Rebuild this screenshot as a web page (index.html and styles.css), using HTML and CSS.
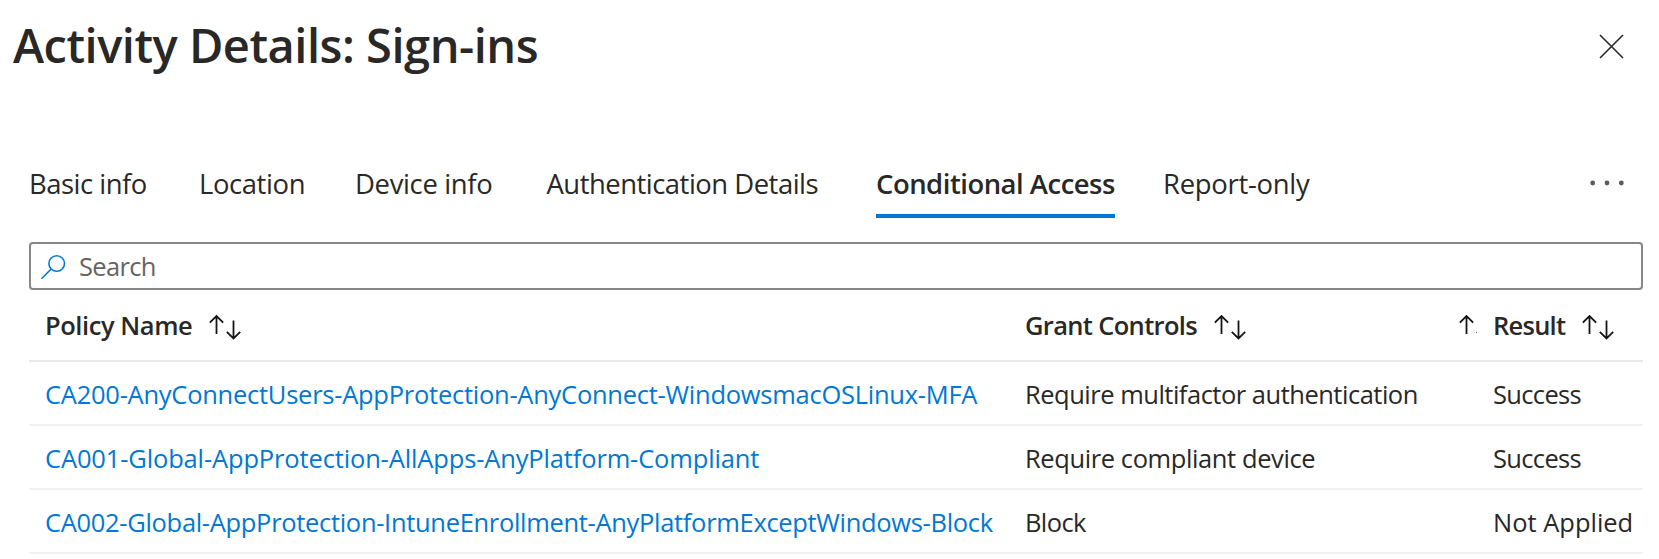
FILE: index.html
```html
<!DOCTYPE html>
<html lang="en">
<head>
<meta charset="utf-8">
<title>Activity Details: Sign-ins</title>
<link rel="stylesheet" href="styles.css">
</head>
<body>
<svg class="defs" aria-hidden="true">
  <symbol id="sort" viewBox="0 0 34 26">
    <path d="M8.5 20V2M1.8 8.7L8.5 2l6.7 6.7M25.5 6.5v18M18.8 17.8l6.7 6.7 6.7-6.7"/>
  </symbol>
</svg>
<main class="panel">
  <header class="panel-head">
    <h1 class="title">Activity Details: Sign-ins</h1>
    <button class="close" aria-label="Close">
      <svg class="close-icon" viewBox="0 0 25 25"><path d="M1 1l23 23M24 1L1 24"/></svg>
    </button>
  </header>

  <nav class="tabs">
    <a class="tab tab-basic">Basic info</a>
    <a class="tab tab-location">Location</a>
    <a class="tab tab-device">Device info</a>
    <a class="tab tab-auth">Authentication Details</a>
    <a class="tab tab-active">Conditional Access</a>
    <a class="tab tab-report">Report-only</a>
    <button class="more" aria-label="More">
      <svg class="more-icon" viewBox="0 0 34 6"><circle cx="2.7" cy="3" r="2.4"/><circle cx="17" cy="3" r="2.4"/><circle cx="31.3" cy="3" r="2.4"/></svg>
    </button>
  </nav>

  <div class="search">
    <svg class="search-icon" viewBox="0 0 26 26"><circle cx="16.7" cy="9.5" r="7.8"/><path d="M11.2 15L1.5 24.7"/></svg>
    <span class="search-text">Search</span>
  </div>

  <section class="table">
    <div class="row row-head">
      <div class="cell"><span class="label-policy">Policy Name</span><svg class="sort"><use href="#sort"/></svg></div>
      <div class="cell"><span class="label-grant">Grant Controls</span><svg class="sort"><use href="#sort"/></svg></div>
      <div class="cell cell-narrow"><svg class="sort"><use href="#sort"/></svg></div>
      <div class="cell"><span class="label-result">Result</span><svg class="sort"><use href="#sort"/></svg></div>
    </div>
    <div class="row">
      <div class="cell"><a class="link link-mfa">CA200-AnyConnectUsers-AppProtection-AnyConnect-WindowsmacOSLinux-MFA</a></div>
      <div class="cell grant-mfa">Require multifactor authentication</div>
      <div class="cell cell-narrow"></div>
      <div class="cell success">Success</div>
    </div>
    <div class="row">
      <div class="cell"><a class="link link-compliant">CA001-Global-AppProtection-AllApps-AnyPlatform-Compliant</a></div>
      <div class="cell grant-device">Require compliant device</div>
      <div class="cell cell-narrow"></div>
      <div class="cell success">Success</div>
    </div>
    <div class="row">
      <div class="cell"><a class="link link-block">CA002-Global-AppProtection-IntuneEnrollment-AnyPlatformExceptWindows-Block</a></div>
      <div class="cell grant-block">Block</div>
      <div class="cell cell-narrow"></div>
      <div class="cell">Not Applied</div>
    </div>
  </section>
</main>
</body>
</html>
```
FILE: styles.css
```css
* { box-sizing: border-box; }

body {
  margin: 0;
  background: #fff;
  color: #292827;
  font-family: "Open Sans", "Noto Sans", sans-serif;
  font-size: 25.48px;
  overflow: hidden;
}

.defs { display: none; }
.panel { width: 1659px; height: 559px; }
button { border: 0; padding: 0; background: none; }

.panel-head {
  display: flex;
  justify-content: space-between;
  height: 163px;
  padding: 13px 35.5px 0 13px;
}
.title {
  margin: 0;
  font-size: 47px;
  font-weight: 600;
  line-height: 64px;
  letter-spacing: -0.484px;
}
.close { width: 25px; height: 25px; margin-top: 20.5px; }
.close-icon { display: block; width: 25px; height: 25px; fill: none; stroke: #292827; stroke-width: 1.6; }

.tabs {
  display: grid;
  grid-template-columns: 170px 156px 191.5px 329.5px 287px 1fr 34px;
  height: 79px;
  padding: 0 35px 0 29px;
  font-size: 27.44px;
  line-height: 42px;
  white-space: nowrap;
}
.tab { height: 55px; justify-self: start; }
.tab-basic { letter-spacing: -0.5px; }
.tab-location { letter-spacing: -0.4px; }
.tab-device { letter-spacing: -0.34px; }
.tab-auth { letter-spacing: -0.499px; }
.tab-active { width: 239px; font-weight: 600; letter-spacing: -0.484px; border-bottom: 4px solid #0078d4; }
.tab-report { letter-spacing: -0.271px; }
.more { height: 40px; }
.more-icon { display: block; width: 34px; height: 6px; fill: #5c5b5a; }

.search {
  display: flex;
  align-items: center;
  height: 48px;
  margin: 0 16px 0 29px;
  padding-left: 9px;
  border: 2px solid #868686;
  border-radius: 4px;
}
.search-icon { width: 26px; height: 26px; margin-top: 1px; fill: none; stroke: #0078d4; stroke-width: 1.6; }
.search-text { margin: -1px 0 0 13px; color: #666463; letter-spacing: -0.65px; }

.table { margin: 0 16px 0 29px; }
.row {
  display: grid;
  grid-template-columns: 980px 433px 35px 166px;
  height: 64px;
  padding-top: 2px;
  border-bottom: 2px solid #f1f1f1;
  white-space: nowrap;
}
.row-head {
  height: 72px;
  padding-top: 0;
  border-bottom-color: #e9e9e9;
  font-weight: 600;
}
.cell { display: flex; align-items: center; padding-left: 16px; min-width: 0; }
.cell-narrow { overflow: hidden; }
.sort { flex: none; width: 34px; height: 26px; margin: 3px 0 0 15.5px; fill: none; stroke: #161616; stroke-width: 1.8; }
.cell-narrow .sort { margin-left: 0; }

.label-policy { letter-spacing: -0.432px; }
.label-grant { letter-spacing: -0.65px; }
.label-result { letter-spacing: -0.724px; }
.link { color: #0078d4; }
.link-mfa { letter-spacing: -0.24px; }
.link-compliant { letter-spacing: -0.13px; }
.link-block { letter-spacing: -0.3px; }
.grant-mfa { letter-spacing: -0.48px; }
.grant-device { letter-spacing: -0.39px; }
.grant-block { letter-spacing: -0.6px; }
.success { letter-spacing: -0.65px; }
```
